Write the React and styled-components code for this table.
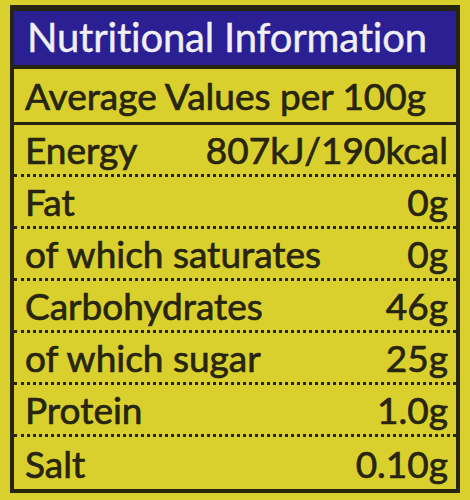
import React from "react";
import styled, { createGlobalStyle } from "styled-components";

/* style */
const GlobalStyle = createGlobalStyle`
  html, body {
    margin: 0;
    padding: 0;
    background: #dad02d;
  }
  body {
    font-family: Lato, "Open Sans", sans-serif;
    font-variant-ligatures: none;
  }
`;

const Page = styled.div`
  width: 470px;
  height: 500px;
  padding: 5px 10px 0 10px;
  box-sizing: border-box;
  background: #dad02d;
`;

const Label = styled.section`
  width: 450px;
  border: 4px solid #27250f;
  border-top-width: 6px;
  box-sizing: border-box;
  background: #dad02d;
  color: #27250f;
`;

const Header = styled.h1`
  margin: 0;
  height: 52px;
  padding: 0 0 2px 13px;
  display: flex;
  align-items: center;
  background: #2a1f93;
  color: #f1eff4;
  font-size: 40px;
  font-weight: 400;
  line-height: 1;
  letter-spacing: -0.2px;
  -webkit-text-stroke: 0.4px #f1eff4;
  border-bottom: 4px solid #27250f;
`;

const Row = styled.div`
  display: flex;
  justify-content: space-between;
  align-items: center;
  height: ${p => p.h || 49}px;
  padding: 0 8px 0 11px;
  font-size: 37px;
  line-height: 1;
  -webkit-text-stroke: 0.7px #27250f;
  border-bottom: ${p => p.line === "solid" ? "3px solid #27250f" : p.line === "none" ? "none" : "3px dotted #27250f"};
`;

const rows = [
  ["Energy", "807kJ/190kcal"],
  ["Fat", "0g"],
  ["of which saturates", "0g"],
  ["Carbohydrates", "46g"],
  ["of which sugar", "25g"],
  ["Protein", "1.0g"],
  ["Salt", "0.10g"],
];

export default function App() {
  return (
    <Page>
      <GlobalStyle />
      <Label>
        <Header>Nutritional Information</Header>
        <Row h={53} line="solid">
          <span>Average Values per 100g</span>
        </Row>
        {rows.map(([name, value], i) => {
          const last = i === rows.length - 1;
          return (
            <Row key={name} h={last ? 52 : 49} line={last ? "none" : "dotted"}>
              <span>{name}</span>
              <span>{value}</span>
            </Row>
          );
        })}
      </Label>
    </Page>
  );
}
